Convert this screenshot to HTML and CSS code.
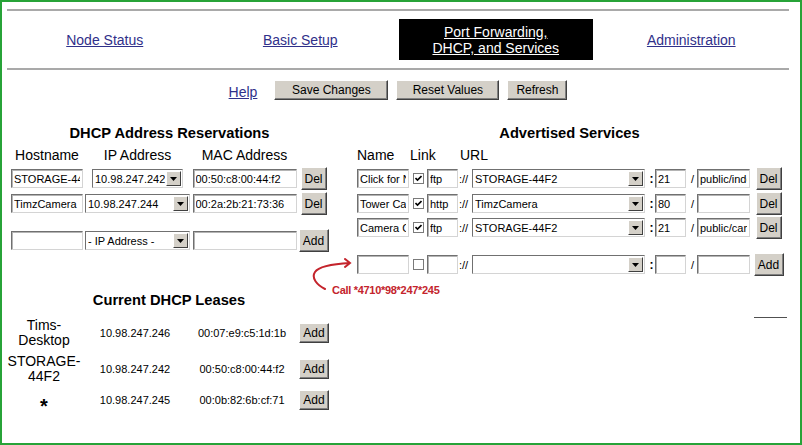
FILE: index.html
```html
<!DOCTYPE html>
<html lang="en">
<head>
    <meta charset="UTF-8">
    <title>Port Forwarding, DHCP, and Services</title>
    <link rel="stylesheet" href="styles.css">
</head>
<body>
<div class="frame">
    <nav class="tabs">
        <div class="tab"><a href="#">Node Status</a></div>
        <div class="tab"><a href="#">Basic Setup</a></div>
        <div class="tab tab-active"><a href="#">Port Forwarding,<br>DHCP, and Services</a></div>
        <div class="tab"><a href="#">Administration</a></div>
    </nav>

    <div class="toolbar">
        <a href="#" class="help">Help</a>
        <button class="btn btn-save">Save Changes</button>
        <button class="btn btn-reset">Reset Values</button>
        <button class="btn btn-refresh">Refresh</button>
    </div>

    <div class="main">
        <div class="col-left">
            <div class="reservations">
                <h3 class="section-title">DHCP Address Reservations</h3>
                <div class="res-row res-head">
                    <span>Hostname</span><span>IP Address</span><span>MAC Address</span>
                </div>
                <div class="res-row res-first">
                    <input class="field host" value="STORAGE-44F2">
                    <label class="select ip-short">
                        <select><option>10.98.247.242</option></select>
                        <span class="drop"><svg width="7" height="4" viewBox="0 0 7 4"><path d="M0 0h7L3.5 4z"/></svg></span>
                    </label>
                    <input class="field mac" value="00:50:c8:00:44:f2">
                    <button class="btn btn-small">Del</button>
                </div>
                <div class="res-row">
                    <input class="field host" value="TimzCamera">
                    <label class="select ip-wide">
                        <select><option>10.98.247.244</option></select>
                        <span class="drop"><svg width="7" height="4" viewBox="0 0 7 4"><path d="M0 0h7L3.5 4z"/></svg></span>
                    </label>
                    <input class="field mac" value="00:2a:2b:21:73:36">
                    <button class="btn btn-small">Del</button>
                </div>
                <div class="res-row res-new">
                    <input class="field host" value="">
                    <label class="select ip-wide">
                        <select><option>- IP Address -</option></select>
                        <span class="drop"><svg width="7" height="4" viewBox="0 0 7 4"><path d="M0 0h7L3.5 4z"/></svg></span>
                    </label>
                    <input class="field mac" value="">
                    <button class="btn btn-small btn-add">Add</button>
                </div>
            </div>

            <div class="leases">
                <h3 class="section-title">Current DHCP Leases</h3>
                <div class="lease-row lease-first">
                    <span class="lease-host">Tims-<br>Desktop</span>
                    <span class="lease-ip">10.98.247.246</span>
                    <span class="lease-mac">00:07:e9:c5:1d:1b</span>
                    <button class="btn btn-lease">Add</button>
                </div>
                <div class="lease-row">
                    <span class="lease-host">STORAGE-<br>44F2</span>
                    <span class="lease-ip">10.98.247.242</span>
                    <span class="lease-mac">00:50:c8:00:44:f2</span>
                    <button class="btn btn-lease">Add</button>
                </div>
                <div class="lease-row">
                    <span class="lease-host lease-star">*</span>
                    <span class="lease-ip">10.98.247.245</span>
                    <span class="lease-mac">00:0b:82:6b:cf:71</span>
                    <button class="btn btn-lease">Add</button>
                </div>
            </div>
        </div>

        <div class="col-right">
            <div class="services">
                <h3 class="section-title">Advertised Services</h3>
                <div class="svc-row svc-head">
                    <span class="head-name">Name</span>
                    <span class="head-link">Link</span>
                    <span class="head-url">URL</span>
                </div>
                <div class="svc-row svc-first">
                    <input class="field svc-name" value="Click for NAS">
                    <span class="check"><svg width="7" height="7" viewBox="0 0 7 7"><path d="M0.5 3l2 2L6.5 1" stroke="#000" stroke-width="1.6" fill="none"/></svg></span>
                    <input class="field svc-proto" value="ftp">
                    <span class="sep">://</span>
                    <label class="select svc-host">
                        <select><option>STORAGE-44F2</option></select>
                        <span class="drop"><svg width="7" height="4" viewBox="0 0 7 4"><path d="M0 0h7L3.5 4z"/></svg></span>
                    </label>
                    <span class="colon">:</span>
                    <input class="field svc-port" value="21">
                    <span class="slash">/</span>
                    <input class="field svc-path" value="public/index.html">
                    <button class="btn btn-small">Del</button>
                </div>
                <div class="svc-row">
                    <input class="field svc-name" value="Tower Camera">
                    <span class="check"><svg width="7" height="7" viewBox="0 0 7 7"><path d="M0.5 3l2 2L6.5 1" stroke="#000" stroke-width="1.6" fill="none"/></svg></span>
                    <input class="field svc-proto" value="http">
                    <span class="sep">://</span>
                    <label class="select svc-host">
                        <select><option>TimzCamera</option></select>
                        <span class="drop"><svg width="7" height="4" viewBox="0 0 7 4"><path d="M0 0h7L3.5 4z"/></svg></span>
                    </label>
                    <span class="colon">:</span>
                    <input class="field svc-port" value="80">
                    <span class="slash">/</span>
                    <input class="field svc-path" value="">
                    <button class="btn btn-small">Del</button>
                </div>
                <div class="svc-row svc-third">
                    <input class="field svc-name" value="Camera Captures">
                    <span class="check"><svg width="7" height="7" viewBox="0 0 7 7"><path d="M0.5 3l2 2L6.5 1" stroke="#000" stroke-width="1.6" fill="none"/></svg></span>
                    <input class="field svc-proto" value="ftp">
                    <span class="sep">://</span>
                    <label class="select svc-host">
                        <select><option>STORAGE-44F2</option></select>
                        <span class="drop"><svg width="7" height="4" viewBox="0 0 7 4"><path d="M0 0h7L3.5 4z"/></svg></span>
                    </label>
                    <span class="colon">:</span>
                    <input class="field svc-port" value="21">
                    <span class="slash">/</span>
                    <input class="field svc-path" value="public/camera">
                    <button class="btn btn-small">Del</button>
                </div>
                <div class="svc-row svc-new">
                    <input class="field svc-name" value="">
                    <span class="check"></span>
                    <input class="field svc-proto" value="">
                    <span class="sep">://</span>
                    <label class="select svc-host">
                        <select><option></option></select>
                        <span class="drop"><svg width="7" height="4" viewBox="0 0 7 4"><path d="M0 0h7L3.5 4z"/></svg></span>
                    </label>
                    <span class="colon">:</span>
                    <input class="field svc-port" value="">
                    <span class="slash">/</span>
                    <input class="field svc-path" value="">
                    <button class="btn btn-small btn-add">Add</button>
                </div>
            </div>

            <!-- hand-drawn note pointing at the new service row -->
            <div class="note">
                <svg width="45" height="32" viewBox="0 0 45 32">
                    <path d="M15 31C7 27 1 20 5 14C9 8 22 6 40 5M35 1L40 5L35 9" stroke="#c4242c" stroke-width="2" fill="none" stroke-linecap="round"/>
                </svg>
                <span class="note-text">Call *4710*98*247*245</span>
            </div>
            <div class="stub"></div>
        </div>
    </div>
</div>
</body>
</html>
```

FILE: styles.css
```css
body {
    margin: 0;
    font-family: "Liberation Sans", Arial, sans-serif;
    background-color: #ffffff;
    color: #000000;
}
.frame {
    width: 802px;
    height: 445px;
    box-sizing: border-box;
    border: 2px solid #27a338;
    padding: 7px 11px 0 5px;
    overflow: hidden;
}
.tabs {
    display: grid;
    grid-template-columns: repeat(4, 1fr);
    align-items: center;
    padding: 8px 0;
    border-top: 2px solid #a9a9a9;
    border-bottom: 2px solid #a9a9a9;
}
.tab {
    text-align: center;
    font-size: 14px;
    line-height: 16px;
}
.tab a {
    color: #30308a;
}
.tab-active {
    height: 41px;
    margin: 0 1px;
    background: #000000;
    display: flex;
    align-items: center;
    justify-content: center;
}
.tab-active a {
    color: #ffffff;
}
.toolbar {
    display: flex;
    justify-content: center;
    align-items: center;
    gap: 8px;
    height: 20px;
    margin-top: 10px;
}
.help {
    font-size: 14px;
    line-height: 16px;
    color: #30308a;
    margin: 4px 9px 0 0;
}
.btn {
    font-family: "Liberation Sans", Arial, sans-serif;
    font-size: 12px;
    color: #000000;
    background: #d4d0c8;
    border: 1px solid;
    border-color: #ffffff #404040 #404040 #ffffff;
    box-shadow: inset -1px -1px 0 #808080;
    padding: 0;
    height: 20px;
    margin: 0;
}
.btn-save {
    width: 114px;
}
.btn-reset {
    width: 103px;
}
.btn-refresh {
    width: 60px;
}
.btn-small {
    width: 26px;
    height: 23px;
    justify-self: center;
}
.btn-add {
    width: 30px;
}
.btn-lease {
    width: 30px;
    height: 20px;
}
.main {
    display: grid;
    grid-template-columns: 348px 1fr;
    margin-top: 25px;
}
.section-title {
    margin: 0;
    font-size: 14.7px;
    line-height: 16px;
    font-weight: bold;
    text-align: center;
}

/* inputs */
.field {
    box-sizing: border-box;
    height: 19px;
    margin: 0;
    padding: 0 2px;
    font: 11px "Liberation Sans", Arial, sans-serif;
    color: #000000;
    background: #ffffff;
    border: 1px solid;
    border-color: #707070 #d4d4d4 #d4d4d4 #707070;
    box-shadow: inset 1px 1px 0 #b4b4b4;
    outline: none;
}
.select {
    box-sizing: border-box;
    display: flex;
    align-items: center;
    height: 19px;
    padding: 1px;
    background: #ffffff;
    border: 1px solid;
    border-color: #707070 #d4d4d4 #d4d4d4 #707070;
}
.select select {
    appearance: none;
    flex: 1;
    min-width: 0;
    height: 15px;
    margin: 0;
    padding: 0 1px;
    border: 0;
    background: transparent;
    font: 11px "Liberation Sans", Arial, sans-serif;
    color: #000000;
    outline: none;
}
.drop {
    box-sizing: border-box;
    width: 15px;
    height: 15px;
    display: flex;
    align-items: center;
    justify-content: center;
    background: #d4d0c8;
    border: 1px solid;
    border-color: #ffffff #404040 #404040 #ffffff;
}

/* reservations */
.reservations {
    width: 319px;
    margin-left: 3px;
}
.res-row {
    display: grid;
    grid-template-columns: 74px 107px 107px 31px;
    align-items: center;
    justify-items: center;
    height: 23px;
    margin-top: 2px;
}
.res-head {
    height: 16px;
    margin-top: 6px;
    font-size: 14px;
    line-height: 16px;
}
.res-first {
    margin-top: 4px;
}
.res-new {
    margin-top: 14px;
}
.host {
    width: 72px;
}
.mac {
    width: 104px;
}
.ip-short {
    width: 91px;
}
.ip-wide {
    width: 105px;
}

/* leases */
.leases {
    width: 326px;
    margin: 40px 0 0 -1px;
}
.lease-row {
    display: grid;
    grid-template-columns: 76px 106px 108px 36px;
    align-items: center;
    justify-items: center;
    margin-top: 6px;
}
.lease-first {
    margin-top: 10px;
}
.lease-host {
    font-size: 14px;
    line-height: 15px;
    text-align: center;
}
.lease-ip, .lease-mac {
    font-size: 11px;
}
.lease-star {
    font-size: 20px;
    font-weight: bold;
    line-height: 20px;
    margin: 6px 0 -6px 0;
}

/* services */
.col-right {
    position: relative;
}
.services {
    width: 429px;
}
.svc-row {
    display: grid;
    grid-template-columns: 55px 16px 33px 13px 176px 7px 33px 9px 56px 31px;
    align-items: center;
    height: 23px;
    margin-top: 2px;
}
.svc-head {
    height: 16px;
    margin-top: 6px;
    font-size: 14px;
    line-height: 16px;
}
.head-name {
    padding-left: 2px;
}
.head-link {
    grid-column: 2 / 4;
}
.head-url {
    grid-column: 4 / -1;
    padding-left: 1px;
}
.svc-first {
    margin-top: 4px;
}
.svc-third {
    margin-top: 1px;
}
.svc-new {
    margin-top: 14px;
}
.svc-name {
    width: 52px;
    margin-left: 2px;
}
.check {
    box-sizing: border-box;
    width: 11px;
    height: 11px;
    justify-self: center;
    display: flex;
    align-items: center;
    justify-content: center;
    background: #ffffff;
    border: 1px solid #7a7a7a;
}
.svc-proto {
    width: 31px;
    margin-left: 1px;
}
.sep {
    font-size: 11px;
}
.svc-host {
    width: 173px;
}
.colon {
    font-size: 12px;
    font-weight: bold;
    text-align: center;
}
.svc-port {
    width: 31px;
}
.slash {
    font-size: 11px;
    text-align: center;
}
.svc-path {
    width: 53px;
}
.note {
    position: absolute;
    left: -45px;
    top: 133px;
    color: #c4242c;
}
.note svg {
    display: block;
}
.note-text {
    display: block;
    margin: -7px 0 0 22px;
    font-size: 11px;
    font-weight: bold;
    line-height: 14px;
    letter-spacing: -0.3px;
    white-space: nowrap;
}
.stub {
    width: 33px;
    margin: 41px 0 0 399px;
    border-top: 1px solid #505050;
}
```
